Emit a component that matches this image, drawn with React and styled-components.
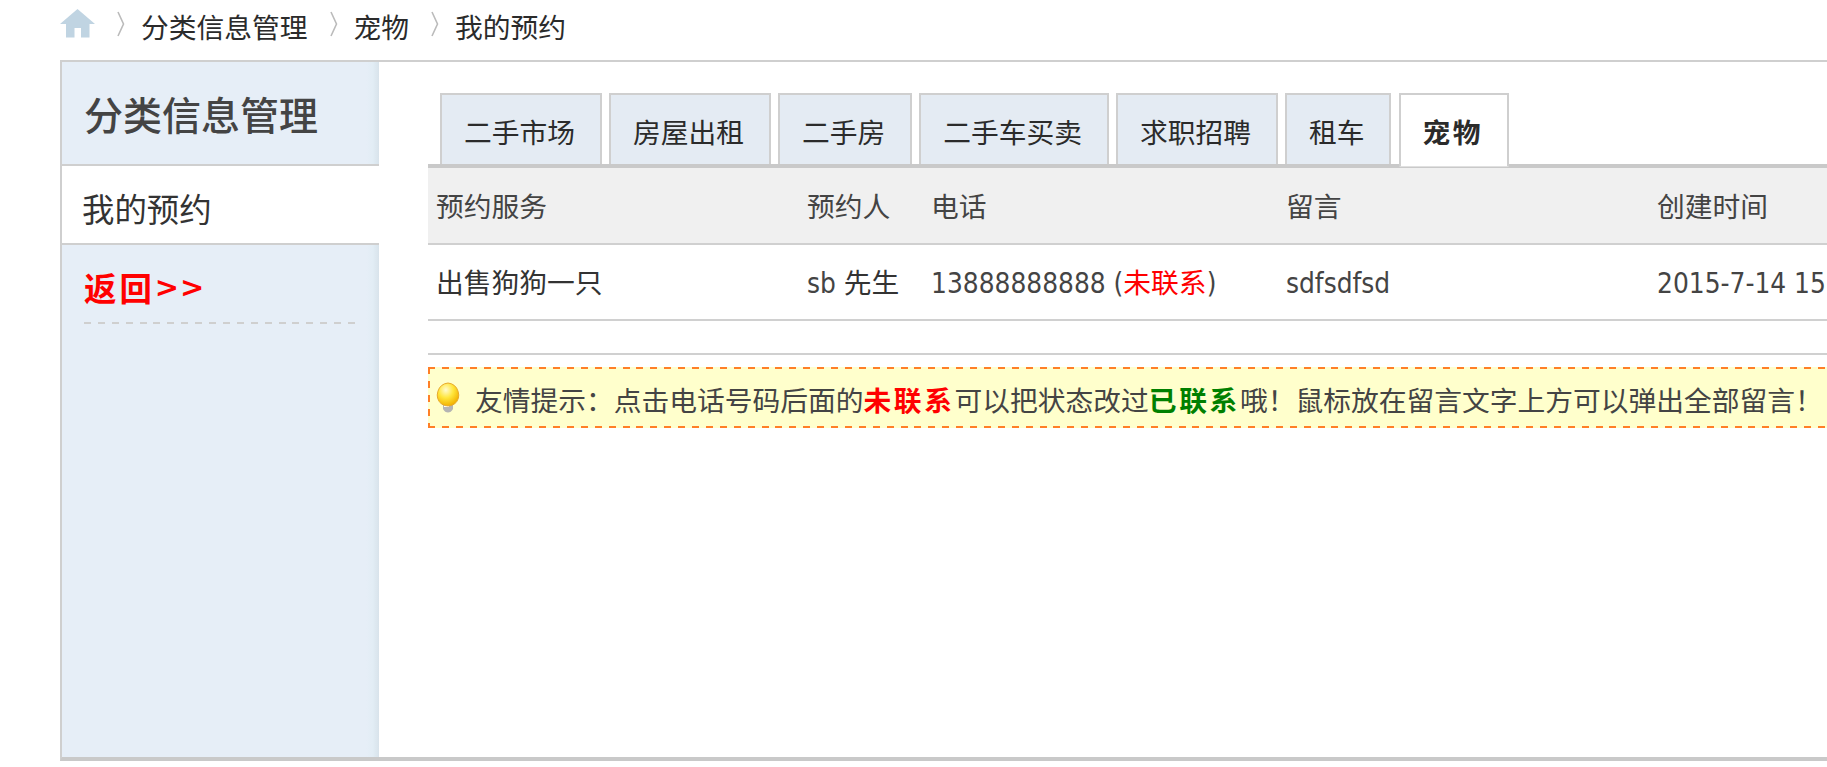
import React from "react";
import styled, { createGlobalStyle, css } from "styled-components";

const GlobalStyle = createGlobalStyle`
  * {
    box-sizing: border-box;
  }
  body {
    margin: 0;
    background-color: white;
    color: #333;
    font-family: "DejaVu Sans Condensed", "Noto Sans CJK SC", sans-serif;
    font-size: 27.75px;
    overflow: hidden;
  }
`;

const Page = styled.div`
  display: flex;
  flex-direction: column;
  width: 100vw;
  height: 767px;
  padding: 0 0 6px 60px;
  white-space: nowrap;
  overflow: hidden;
`;

const Breadcrumb = styled.div`
  display: flex;
  flex-direction: row;
  height: 60px;
  line-height: 52px;
  font-family: "Noto Sans CJK SC", sans-serif;
  color: #2b2b2b;
`;

const HomeIcon = styled.svg`
  width: 35px;
  height: 29px;
  margin-top: 9px;
`;

const Arrow = styled.svg`
  width: 8px;
  height: 26px;
  margin: 11px ${(props) => props.$after}px 0 ${(props) => props.$before}px;
`;

const Panel = styled.div`
  display: flex;
  flex-direction: row;
  flex: 1;
  border-top: 2px solid #cfcfcf;
  border-left: 2px solid #cfcfcf;
  border-bottom: 4px solid #c9c9c9;
`;

const Sidebar = styled.div`
  display: flex;
  flex-direction: column;
  width: 317px;
  background: linear-gradient(to right, #e6eef7 96%, #e2edf5 98%, #d8e3eb 100%);
`;

const SidebarTitle = styled.div`
  height: 104px;
  padding-left: 22px;
  border-bottom: 2px solid #cfcfcf;
  line-height: 103px;
  font-size: 39px;
  font-weight: 500;
  font-family: "Noto Sans CJK SC", sans-serif;
  color: #444;
`;

const SidebarItem = styled.div`
  height: 79px;
  padding-left: 20px;
  border-bottom: 2px solid #cfcfcf;
  background-color: white;
  line-height: 84px;
  font-size: 32.4px;
  font-family: "Noto Sans CJK SC", sans-serif;
`;

const BackLink = styled.div`
  display: flex;
  height: 79px;
  margin: 0 22px 0 22px;
  line-height: 84px;
  font-size: 32.4px;
  font-weight: bold;
  font-family: "Noto Sans CJK SC", sans-serif;
  letter-spacing: 3px;
  color: #f00;
  background: repeating-linear-gradient(to right, #cfcfcf 0 7px, transparent 7px 13.9px) bottom / 100% 2px no-repeat;
`;

const BackArrows = styled.span`
  font-family: "DejaVu Sans", sans-serif;
  font-size: 29px;
  letter-spacing: 1px;
`;

const Content = styled.div`
  display: flex;
  flex-direction: column;
  flex: 1;
  min-width: 0;
  padding: 31px 0 0 49px;
`;

const Tabs = styled.div`
  display: flex;
  flex-direction: row;
  height: 75px;
  padding-left: 12px;
  gap: 7.5px;
  border-bottom: 4px solid #c9c9c9;
`;

const Tab = styled.div`
  height: 71px;
  padding: 0 24.5px 0 22px;
  border: 2px solid #cfcfcf;
  border-bottom: none;
  background-color: #e4ebf3;
  line-height: 73px;
  font-family: "Noto Sans CJK SC", sans-serif;
  color: #2b2b2b;
  ${(props) =>
    props.$active &&
    css`
      height: 74px;
      background-color: white;
      border-bottom: 1px solid #e0e0e0;
      font-weight: bold;
      letter-spacing: 2.3px;
    `}
`;

const Row = styled.div`
  display: grid;
  grid-template-columns: 371px 124px 355px 371px 1fr;
  height: ${(props) => (props.$head ? 77 : 76)}px;
  padding-left: 8px;
  border-bottom: 2px solid #d0d0d0;
  background-color: ${(props) => (props.$head ? "#f0f0f0" : "white")};
  color: ${(props) => (props.$head ? "#444" : "#333")};
  line-height: ${(props) => (props.$head ? 79 : 77)}px;
`;

const Latin = styled.span`
  color: #444;
  letter-spacing: ${(props) => props.$spacing || 0}px;
`;

const Status = styled.span`
  color: #f00;
`;

const Divider = styled.div`
  height: 34px;
  border-bottom: 2px solid #d0d0d0;
`;

const Notice = styled.div`
  display: flex;
  flex-direction: row;
  flex-shrink: 0;
  width: 1500px;
  height: 61px;
  margin-top: 12px;
  padding-left: 7px;
  background:
    repeating-linear-gradient(to right, #ff7f27 0 7px, transparent 7px 13.9px) top / 100% 2px no-repeat,
    repeating-linear-gradient(to right, #ff7f27 0 7px, transparent 7px 13.9px) bottom / 100% 2px no-repeat,
    repeating-linear-gradient(to bottom, #ff7f27 0 7px, transparent 7px 13.9px) left / 2px 100% no-repeat,
    #ffffcc;
  line-height: 64px;
  font-family: "Noto Sans CJK SC", sans-serif;
  color: #444;
`;

const Bulb = styled.svg`
  width: 26px;
  height: 31px;
  margin: 15px 14px 0 0;
`;

const Strong = styled.b`
  letter-spacing: 2.6px;
  color: ${(props) => props.$color};
`;

const tabs = ["二手市场", "房屋出租", "二手房", "二手车买卖", "求职招聘", "租车", "宠物"];

function Chevron({ before, after }) {
  return (
    <Arrow viewBox="0 0 8 26" $before={before} $after={after}>
      <path d="M1 1 L6.5 13 L1 25" fill="none" stroke="#bbb" strokeWidth="1.6" />
    </Arrow>
  );
}

function App() {
  return (
    <Page>
      <GlobalStyle />
      <Breadcrumb>
        <HomeIcon viewBox="0 0 35 29">
          <path d="M17.5 0 L35 15 H29.5 V28.5 H21 V19 H14.5 V28.5 H6 V15 H0 Z" fill="#c0d4e2" />
        </HomeIcon>
        <Chevron before={22} after={16} />
        分类信息管理
        <Chevron before={22} after={16} />
        宠物
        <Chevron before={22} after={16} />
        我的预约
      </Breadcrumb>
      <Panel>
        <Sidebar>
          <SidebarTitle>分类信息管理</SidebarTitle>
          <SidebarItem>我的预约</SidebarItem>
          <BackLink>
            返回<BackArrows>&gt;&gt;</BackArrows>
          </BackLink>
        </Sidebar>
        <Content>
          <Tabs>
            {tabs.map((tab) => (
              <Tab key={tab} $active={tab === "宠物"}>{tab}</Tab>
            ))}
          </Tabs>
          <Row $head>
            <span>预约服务</span>
            <span>预约人</span>
            <span>电话</span>
            <span>留言</span>
            <span>创建时间</span>
          </Row>
          <Row>
            <span>出售狗狗一只</span>
            <span><Latin>sb </Latin>先生</span>
            <span>
              <Latin>13888888888 (</Latin>
              <Status>未联系</Status>
              <Latin>)</Latin>
            </span>
            <Latin>sdfsdfsd</Latin>
            <Latin>2015-7-14 15:20</Latin>
          </Row>
          <Divider />
          <Notice>
            <Bulb viewBox="0 0 26 31">
              <defs>
                <radialGradient id="glow" cx="40%" cy="30%" r="70%">
                  <stop offset="0" stopColor="#fffbd0" />
                  <stop offset="0.5" stopColor="#ffe63c" />
                  <stop offset="1" stopColor="#f2b200" />
                </radialGradient>
              </defs>
              <path d="M8 22 H18 V27 Q16 30.5 13 30.5 Q10 30.5 8 27 Z" fill="#b4b4b4" />
              <path d="M9 24 H14" stroke="#fff" strokeWidth="2" />
              <path d="M13 1 A12 12 0 0 1 19.5 22 Q13 26 6.5 22 A12 12 0 0 1 13 1 Z" fill="url(#glow)" stroke="#e8a92c" strokeWidth="1" />
            </Bulb>
            <span>
              友情提示：点击电话号码后面的<Strong $color="#f00">未联系</Strong>可以把状态改过
              <Strong $color="green">已联系</Strong>哦！鼠标放在留言文字上方可以弹出全部留言！
            </span>
          </Notice>
        </Content>
      </Panel>
    </Page>
  );
}

export default App;
